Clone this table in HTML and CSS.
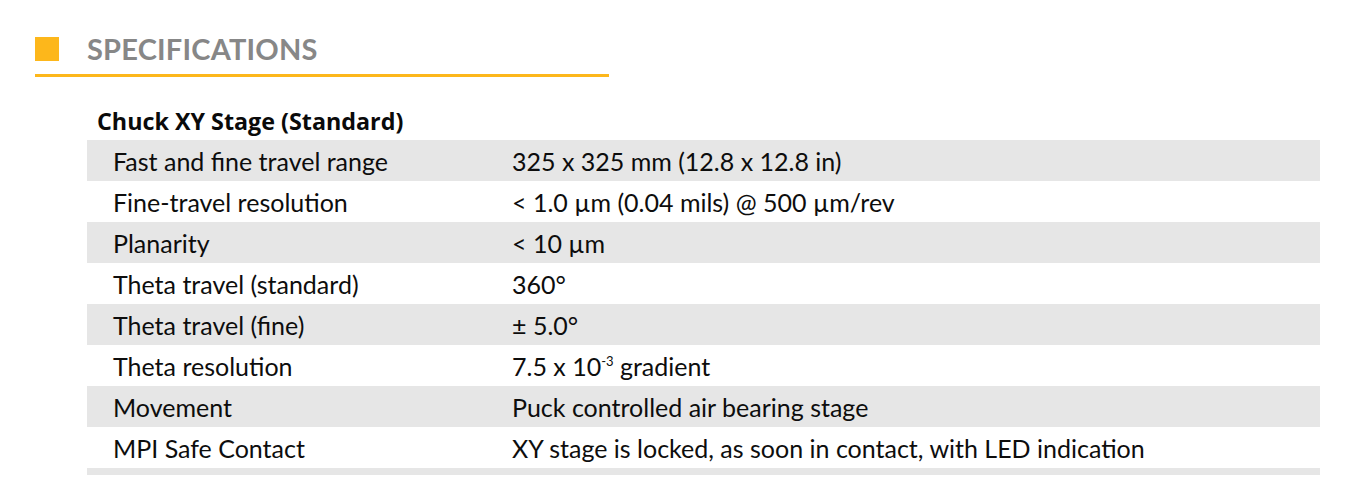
FILE: index.html
```html
<!DOCTYPE html>
<html lang="en">
<head>
<meta charset="utf-8">
<title>Specifications</title>
<link rel="stylesheet" href="styles.css">
</head>
<body>
<section class="specs">
  <header class="specs-head">
    <span class="specs-mark"></span>
    <h1 class="specs-title">SPECIFICATIONS</h1>
  </header>
  <div class="specs-rule"></div>
  <h2 class="group-title">Chuck XY Stage (Standard)</h2>
  <div class="spec-table">
    <div class="spec-row alt"><div class="spec-key">Fast and fine travel range</div><div class="spec-val">325 x 325 mm (12.8 x 12.8 in)</div></div>
    <div class="spec-row"><div class="spec-key">Fine-travel resolution</div><div class="spec-val">&lt; 1.0 µm (0.04 mils) @ 500 µm/rev</div></div>
    <div class="spec-row alt"><div class="spec-key">Planarity</div><div class="spec-val">&lt; 10 µm</div></div>
    <div class="spec-row"><div class="spec-key">Theta travel (standard)</div><div class="spec-val">360°</div></div>
    <div class="spec-row alt"><div class="spec-key">Theta travel (fine)</div><div class="spec-val">± 5.0°</div></div>
    <div class="spec-row"><div class="spec-key">Theta resolution</div><div class="spec-val">7.5 x 10<sup class="exp">-3</sup> gradient</div></div>
    <div class="spec-row alt"><div class="spec-key">Movement</div><div class="spec-val">Puck controlled air bearing stage</div></div>
    <div class="spec-row"><div class="spec-key">MPI Safe Contact</div><div class="spec-val">XY stage is locked, as soon in contact, with LED indication</div></div>
    <div class="spec-tail"></div>
  </div>
</section>
</body>
</html>
```
FILE: styles.css
```css
html, body {
  margin: 0;
  padding: 0;
  background: #ffffff;
}
body {
  font-family: Lato, "Liberation Sans", sans-serif;
  color: #0d0d0d;
}
.specs {
  padding: 37px 0 0 35px;
}
.specs-head {
  display: flex;
  align-items: center;
  gap: 28px;
  height: 24px;
}
.specs-mark {
  width: 24px;
  height: 24px;
  background: #fdb71b;
  flex: none;
}
.specs-title {
  margin: 0;
  font-size: 29px;
  font-weight: 700;
  color: #878787;
  line-height: 24px;
  letter-spacing: 0.2px;
}
.specs-rule {
  width: 574px;
  height: 3px;
  background: #fdb71b;
  margin-top: 13px;
}
.group-title {
  margin: 0;
  padding: 27px 0 0 62px;
  font-family: "Open Sans", Lato, sans-serif;
  font-size: 23.3px;
  font-weight: 700;
  line-height: 34px;
  height: 36px;
  color: #0a0a0a;
}
.spec-table {
  margin-left: 52px;
  width: 1233px;
}
.spec-row {
  display: flex;
  align-items: center;
  height: 41px;
  font-size: 25px;
}
.spec-row.alt {
  background: #e6e6e6;
}
.spec-key {
  width: 399px;
  padding-left: 26px;
  flex: none;
}
.spec-val {
  flex: 1;
}
.exp {
  font-size: 13px;
  vertical-align: 10px;
  line-height: 0;
}
.spec-tail {
  height: 7px;
  background: #e6e6e6;
}
```
